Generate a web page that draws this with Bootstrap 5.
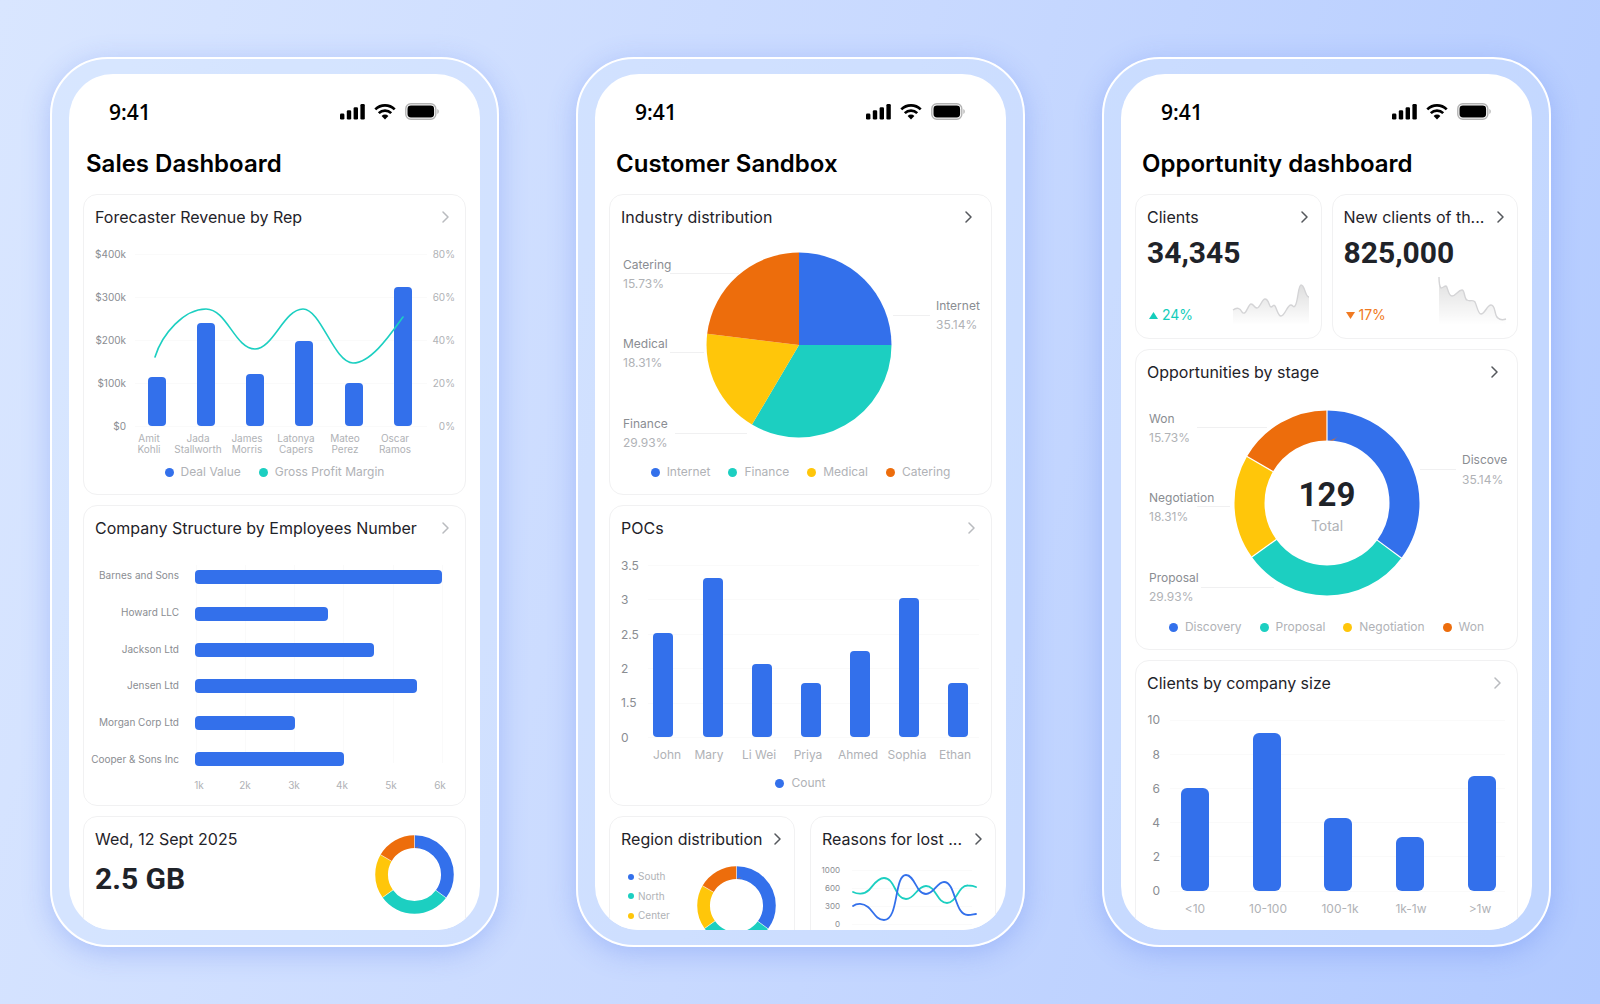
<!DOCTYPE html>
<html lang="en">
<head>
<meta charset="utf-8">
<meta name="viewport" content="width=device-width, initial-scale=1">
<title>CRM mobile dashboards</title>
<link href="https://cdn.jsdelivr.net/npm/bootstrap@5.3.0/dist/css/bootstrap.min.css" rel="stylesheet">
<style>
  :root { --blue:#3370eb; --teal:#1ccfc1; --yellow:#ffc60a; --orange:#ed6d0c; --ink:#1f2329; --name:#8a8d92; --soft:#b0b2b6; --line:#f1f1f2; }
  body { font-family: Inter, "Liberation Sans", sans-serif; color: #000; background: linear-gradient(105deg, #d9e6ff 0%, #c8d9ff 50%, #b2caff 100%) fixed; }
  .stage { display: grid; grid-template-columns: repeat(3, minmax(0, 1fr)); gap: 77px; height: 100vh; padding: 57px 49px 57px 50px; }
  .phone { min-height: 0; padding: 15px 17px; border: 2px solid #fff; border-radius: 58px; background: rgba(216, 233, 255, .36); box-shadow: 0 6px 28px rgba(84, 122, 235, .32); }
  .screen { height: 100%; overflow: hidden; padding: 0 14px; border-radius: 44px; background: #fff; }
  .status { height: 75px; padding: 0 27px 0 26px; }
  .clock { font: 600 21px/24px "Open Sans", "Noto Sans", sans-serif; }
  .signal { gap: 9px; }
  .page-title { font-size: 24px; line-height: 30px; font-weight: 600; margin: 0 0 15px; padding-left: 7px; }
  .page-title.tight { padding-left: 3px; }
  .tiles { gap: 10px; }
  .tile { border: 1px solid var(--line); border-radius: 14px; background: #fff; min-width: 0; }
  .tile-head { height: 43px; padding: 0 16px 0 11px; }
  .tile-head.inset { padding-right: 19px; }
  .tile-head.slim { padding-right: 13px; }
  .tile-title { font-size: 16px; line-height: 20px; font-weight: 400; margin: 0; white-space: nowrap; color: var(--ink); }
  .go { display: flex; color: #b9bbbf; }
  .inset .go, .slim .go { color: #55585d; }
  .pair { display: grid; grid-template-columns: 1fr 1fr; gap: 10px; }
  .pair.wide { gap: 15px; margin-right: -4px; }
  .plot { display: block; width: 100%; height: auto; overflow: visible; }
  .keys { height: 24px; gap: 18px; margin: 0 0 10px; padding: 0; list-style: none; font-size: 12px; line-height: 24px; color: var(--soft); }
  .keys li { display: flex; align-items: center; gap: 7px; }
  .dot { width: 9px; height: 9px; border-radius: 50%; }
  .c-blue { background: var(--blue); } .c-teal { background: var(--teal); } .c-yellow { background: var(--yellow); } .c-orange { background: var(--orange); }
  .figure-big { font: 700 30px/30px Roboto, sans-serif; color: var(--ink); padding-left: 11px; }
  .trend { padding: 2px 12px 11px 13px; }
  .delta { gap: 4px; font-size: 14px; line-height: 24px; }
  .up { color: #14cdbb; } .down { color: #f07a22; }
  .spark { width: 78px; height: 57px; overflow: visible; }
  .storage { padding: 18px 11px 40px 0; }
  .t8 { font-size: 8px; } .t10 { font-size: 10px; } .t12 { font-size: 12px; } .t14 { font-size: 14px; }
  .n { fill: var(--name); } .s { fill: var(--soft); }
  .end { text-anchor: end; } .mid { text-anchor: middle; }
  .total { font: 700 33px Roboto, sans-serif; fill: var(--ink); }
  .rules { stroke: #fafafa; fill: none; } .leads { stroke: #f0f0f1; fill: none; }
  .bars { fill: var(--blue); }
</style>
</head>
<body>
<svg width="0" height="0" class="position-absolute" aria-hidden="true">
  <defs>
    <symbol id="ring" viewBox="-93 -93 186 186">
      <g fill="none" stroke-width="30" transform="rotate(-90)">
        <circle r="77.5" pathLength="10000" stroke="#3370eb" stroke-dasharray="3514 6486"/>
        <circle r="77.5" pathLength="10000" stroke="#1ccfc1" stroke-dasharray="2993 7007" stroke-dashoffset="-3514"/>
        <circle r="77.5" pathLength="10000" stroke="#ffc60a" stroke-dasharray="1831 8169" stroke-dashoffset="-6507"/>
        <circle r="77.5" pathLength="10000" stroke="#ed6d0c" stroke-dasharray="1662 8338" stroke-dashoffset="-8338"/>
        <g stroke="#fff" stroke-width="1.2">
          <path d="M62 0H93"/><path d="M62 0H93" transform="rotate(126.5)"/><path d="M62 0H93" transform="rotate(234.3)"/><path d="M62 0H93" transform="rotate(300.2)"/>
        </g>
      </g>
    </symbol>
    <symbol id="chev" viewBox="0 0 7 12"><path d="M1 1l5 5-5 5" fill="none" stroke="currentColor" stroke-width="1.5" stroke-linecap="round" stroke-linejoin="round"/></symbol>
    <symbol id="bars" viewBox="0 0 25 17"><rect y="10.5" width="4.4" height="6" rx="1.3"/><rect x="6.8" y="7.3" width="4.4" height="9.2" rx="1.3"/><rect x="13.6" y="4.2" width="4.4" height="12.3" rx="1.3"/><rect x="20.4" y="1" width="4.4" height="15.5" rx="1.3"/></symbol>
    <symbol id="wifi" viewBox="0 0 22 17"><g fill="none" stroke="#000" stroke-width="2.7"><path d="M1.3 6.4a13.8 13.8 0 0 1 19.4 0"/><path d="M4.8 10.1a8.8 8.8 0 0 1 12.4 0"/></g><path d="M11 16.4l-3.4-3.5a4.9 4.9 0 0 1 6.8 0z"/></symbol>
    <symbol id="battery" viewBox="0 0 34 17"><rect x=".8" y=".8" width="30" height="15.4" rx="5" fill="none" stroke="#b3b3b3" stroke-width="1.4"/><rect x="2.5" y="2.6" width="26.6" height="11.8" rx="3.4"/><path d="M32.4 6v5c1.8-.8 1.8-4.2 0-5z" fill="#b3b3b3"/></symbol>
    <linearGradient id="fade" x1="0" y1="0" x2="0" y2="1"><stop stop-color="#000" stop-opacity=".13"/><stop offset="1" stop-color="#000" stop-opacity="0"/></linearGradient>
  </defs>
</svg>

<main class="stage">
  <!-- Sales -->
  <section class="phone"><div class="screen">
    <div class="status d-flex align-items-center justify-content-between">
      <span class="clock">9:41</span>
      <span class="signal d-flex"><svg width="25" height="17"><use href="#bars"/></svg><svg width="22" height="17"><use href="#wifi"/></svg><svg width="34" height="17"><use href="#battery"/></svg></span>
    </div>
    <h1 class="page-title tight">Sales Dashboard</h1>
    <div class="tiles d-flex flex-column">
      <article class="tile">
        <header class="tile-head d-flex align-items-center justify-content-between"><h2 class="tile-title">Forecaster Revenue by Rep</h2><a class="go" href="#" aria-label="Open revenue"><svg width="7" height="12"><use href="#chev"/></svg></a></header>
        <svg class="plot" viewBox="0 0 381 222">
          <path class="rules" d="M51 16.5H343M51 59.5H343M51 102.5H343M51 145.5H343M51 188.5H343"/>
          <g class="t10 n end"><text x="42" y="20">$400k</text><text x="42" y="63">$300k</text><text x="42" y="106">$200k</text><text x="42" y="149">$100k</text><text x="42" y="192">$0</text></g>
          <g class="t10 s end"><text x="371" y="20">80%</text><text x="371" y="63">60%</text><text x="371" y="106">40%</text><text x="371" y="149">20%</text><text x="371" y="192">0%</text></g>
          <g class="bars"><rect x="64" y="139" width="18" height="49" rx="4"/><rect x="113" y="85" width="18" height="103" rx="4"/><rect x="162" y="136" width="18" height="52" rx="4"/><rect x="211" y="103" width="18" height="85" rx="4"/><rect x="261" y="145" width="18" height="43" rx="4"/><rect x="310" y="49" width="18" height="139" rx="4"/></g>
          <path fill="none" stroke="#1ccfc1" stroke-width="1.6" stroke-linecap="round" d="M71 119C78 96 100 71 122 71C143 71 151 111 171 111C189 111 200 71 219 71C237 71 250 125 269 125C287 125 306 97 319 79"/>
          <g class="t10 s mid"><text x="65" y="204">Amit</text><text x="65" y="215">Kohli</text><text x="114" y="204">Jada</text><text x="114" y="215">Stallworth</text><text x="163" y="204">James</text><text x="163" y="215">Morris</text><text x="212" y="204">Latonya</text><text x="212" y="215">Capers</text><text x="261" y="204">Mateo</text><text x="261" y="215">Perez</text><text x="311" y="204">Oscar</text><text x="311" y="215">Ramos</text></g>
        </svg>
        <ul class="keys d-flex justify-content-center"><li><span class="dot c-blue"></span>Deal Value</li><li><span class="dot c-teal"></span>Gross Profit Margin</li></ul>
      </article>

      <article class="tile">
        <header class="tile-head d-flex align-items-center justify-content-between"><h2 class="tile-title">Company Structure by Employees Number</h2><a class="go" href="#" aria-label="Open company structure"><svg width="7" height="12"><use href="#chev"/></svg></a></header>
        <svg class="plot" viewBox="0 0 381 256">
          <path class="rules" d="M112.5 16V214M161.5 16V214M210.5 16V214M259.5 16V214M309.5 16V214M358.5 16V214"/>
          <g class="bars"><rect x="111" y="21" width="247" height="14" rx="4"/><rect x="111" y="58" width="133" height="14" rx="4"/><rect x="111" y="94" width="179" height="14" rx="4"/><rect x="111" y="130" width="222" height="14" rx="4"/><rect x="111" y="167" width="100" height="14" rx="4"/><rect x="111" y="203" width="149" height="14" rx="4"/></g>
          <g class="t10 n end"><text x="95" y="30">Barnes and Sons</text><text x="95" y="67">Howard LLC</text><text x="95" y="104">Jackson Ltd</text><text x="95" y="140">Jensen Ltd</text><text x="95" y="177">Morgan Corp Ltd</text><text x="95" y="214">Cooper &amp; Sons Inc</text></g>
          <g class="t10 s mid"><text x="115" y="240">1k</text><text x="161" y="240">2k</text><text x="210" y="240">3k</text><text x="258" y="240">4k</text><text x="307" y="240">5k</text><text x="356" y="240">6k</text></g>
        </svg>
      </article>

      <article class="tile d-flex justify-content-between">
        <div>
          <header class="tile-head d-flex align-items-center"><h2 class="tile-title">Wed, 12 Sept 2025</h2></header>
          <div class="figure-big pt-1">2.5 GB</div>
        </div>
        <div class="storage"><svg class="d-block" width="79" height="79"><use href="#ring"/></svg></div>
      </article>
    </div>
  </div></section>

  <!-- Customers -->
  <section class="phone"><div class="screen">
    <div class="status d-flex align-items-center justify-content-between">
      <span class="clock">9:41</span>
      <span class="signal d-flex"><svg width="25" height="17"><use href="#bars"/></svg><svg width="22" height="17"><use href="#wifi"/></svg><svg width="34" height="17"><use href="#battery"/></svg></span>
    </div>
    <h1 class="page-title">Customer Sandbox</h1>
    <div class="tiles d-flex flex-column">
      <article class="tile">
        <header class="tile-head inset d-flex align-items-center justify-content-between"><h2 class="tile-title">Industry distribution</h2><a class="go" href="#" aria-label="Open industry distribution"><svg width="7" height="12"><use href="#chev"/></svg></a></header>
        <svg class="plot" viewBox="0 0 381 222">
          <path class="leads" d="M60 35.5H129M60 114.5H94M65 195.5H137M283 77.5H320"/>
          <path fill="#3370eb" d="M189 107V14.5A92.5 92.5 0 0 1 281.5 107z"/>
          <path fill="#1ccfc1" d="M189 107H281.5A92.5 92.5 0 0 1 142 186.6z"/>
          <path fill="#ffc60a" d="M189 107L142 186.6A92.5 92.5 0 0 1 97.2 95.8z"/>
          <path fill="#ed6d0c" d="M189 107L97.2 95.8A92.5 92.5 0 0 1 189 14.5z"/>
          <g class="t12 n"><text x="13" y="31">Catering</text><text x="13" y="110">Medical</text><text x="13" y="190">Finance</text><text x="326" y="72">Internet</text></g>
          <g class="t12 s"><text x="13" y="50">15.73%</text><text x="13" y="129">18.31%</text><text x="13" y="209">29.93%</text><text x="326" y="91">35.14%</text></g>
        </svg>
        <ul class="keys d-flex justify-content-center"><li><span class="dot c-blue"></span>Internet</li><li><span class="dot c-teal"></span>Finance</li><li><span class="dot c-yellow"></span>Medical</li><li><span class="dot c-orange"></span>Catering</li></ul>
      </article>

      <article class="tile">
        <header class="tile-head d-flex align-items-center justify-content-between"><h2 class="tile-title">POCs</h2><a class="go" href="#" aria-label="Open POCs"><svg width="7" height="12"><use href="#chev"/></svg></a></header>
        <svg class="plot" viewBox="0 0 381 222">
          <path class="rules" d="M38 16.5H369M38 50.5H369M38 85.5H369M38 119.5H369M38 154.5H369M38 188.5H369"/>
          <g class="t12 n"><text x="11" y="21">3.5</text><text x="11" y="55">3</text><text x="11" y="90">2.5</text><text x="11" y="124">2</text><text x="11" y="158">1.5</text><text x="11" y="193">0</text></g>
          <g class="bars"><rect x="43" y="84" width="20" height="104" rx="4"/><rect x="93" y="29" width="20" height="159" rx="4"/><rect x="142" y="115" width="20" height="73" rx="4"/><rect x="191" y="134" width="20" height="54" rx="4"/><rect x="240" y="102" width="20" height="86" rx="4"/><rect x="289" y="49" width="20" height="139" rx="4"/><rect x="338" y="134" width="20" height="54" rx="4"/></g>
          <g class="t12 s mid"><text x="57" y="210">John</text><text x="99" y="210">Mary</text><text x="149" y="210">Li Wei</text><text x="198" y="210">Priya</text><text x="248" y="210">Ahmed</text><text x="297" y="210">Sophia</text><text x="345" y="210">Ethan</text></g>
        </svg>
        <ul class="keys d-flex justify-content-center"><li><span class="dot c-blue"></span>Count</li></ul>
      </article>

      <div class="pair wide">
        <article class="tile">
          <header class="tile-head slim d-flex align-items-center justify-content-between"><h2 class="tile-title">Region distribution</h2><a class="go" href="#" aria-label="Open region distribution"><svg width="7" height="12"><use href="#chev"/></svg></a></header>
          <svg class="plot" viewBox="0 0 184 110">
            <circle cx="21" cy="17" r="3" fill="#3370eb"/><circle cx="21" cy="36" r="3" fill="#1ccfc1"/><circle cx="21" cy="56" r="3" fill="#ffc60a"/><circle cx="21" cy="75" r="3" fill="#ed6d0c"/>
            <g class="t10 s"><text x="28" y="20">South</text><text x="28" y="40">North</text><text x="28" y="59">Center</text></g>
            <use href="#ring" x="87" y="6" width="79" height="79"/>
          </svg>
        </article>
        <article class="tile">
          <header class="tile-head slim d-flex align-items-center justify-content-between"><h2 class="tile-title">Reasons for lost ...</h2><a class="go" href="#" aria-label="Open reasons for lost deals"><svg width="7" height="12"><use href="#chev"/></svg></a></header>
          <svg class="plot" viewBox="0 0 184 110">
            <path class="rules" d="M41 10.5H161M41 28.5H161M41 46.5H161M41 64.5H161"/>
            <g class="t8 n end"><text x="29" y="13">1000</text><text x="29" y="31">600</text><text x="29" y="49">300</text><text x="29" y="67">0</text></g>
            <g fill="none" stroke-width="1.8" stroke-linecap="round">
              <path stroke="#1ccfc1" d="M42 32C46 34 53 35 58 30C62 26 66 18 73 18C84 18 84 39 95 39C104 39 106 26 115 26C125 26 126 43 136 43C146 43 147 25 157 25.500C161 25.500 163 26 165 27"/>
              <path stroke="#3370eb" d="M42 46C46 43 52 43 57 47C62 51 65 60 73 60C88 60 83 15 95 15C104 15 105 34 115 34C123 34 126 22 133 22C145 22 143 55 157 55C161 55 163 54 165 54"/>
            </g>
          </svg>
        </article>
      </div>
    </div>
  </div></section>

  <!-- Opportunities -->
  <section class="phone"><div class="screen">
    <div class="status d-flex align-items-center justify-content-between">
      <span class="clock">9:41</span>
      <span class="signal d-flex"><svg width="25" height="17"><use href="#bars"/></svg><svg width="22" height="17"><use href="#wifi"/></svg><svg width="34" height="17"><use href="#battery"/></svg></span>
    </div>
    <h1 class="page-title">Opportunity dashboard</h1>
    <div class="tiles d-flex flex-column">
      <div class="pair">
        <article class="tile">
          <header class="tile-head slim d-flex align-items-center justify-content-between"><h2 class="tile-title">Clients</h2><a class="go" href="#" aria-label="Open clients"><svg width="7" height="12"><use href="#chev"/></svg></a></header>
          <div class="figure-big">34,345</div>
          <div class="trend d-flex align-items-end justify-content-between">
            <span class="delta up d-flex align-items-center"><svg width="9" height="7"><path d="M4.500 0L9 7H0z" fill="currentColor"/></svg>24%</span>
            <svg class="spark" viewBox="0 0 78 57">
              <path fill="url(#fade)" d="M2 40C6 37 9 38 11 42C15 47 17 34 20 34C23 34 23 38 26 38C29 38 31 29 34 29C38 29 38 37 40 37C42 37 42 34 44 36C46 39 47 46 50 46C54 46 56 35 60 35C62 35 62 38 64 36C67 33 67 15 70 15C74 15 74 27 78 27V55H2z"/>
              <path fill="none" stroke="#d4d4d6" stroke-width="1.400" d="M2 40C6 37 9 38 11 42C15 47 17 34 20 34C23 34 23 38 26 38C29 38 31 29 34 29C38 29 38 37 40 37C42 37 42 34 44 36C46 39 47 46 50 46C54 46 56 35 60 35C62 35 62 38 64 36C67 33 67 15 70 15C74 15 74 27 78 27"/>
            </svg>
          </div>
        </article>
        <article class="tile">
          <header class="tile-head slim d-flex align-items-center justify-content-between"><h2 class="tile-title">New clients of th...</h2><a class="go" href="#" aria-label="Open new clients"><svg width="7" height="12"><use href="#chev"/></svg></a></header>
          <div class="figure-big">825,000</div>
          <div class="trend d-flex align-items-end justify-content-between">
            <span class="delta down d-flex align-items-center"><svg width="9" height="7"><path d="M4.500 7L9 0H0z" fill="currentColor"/></svg>17%</span>
            <svg class="spark" viewBox="0 0 78 57">
              <path fill="url(#fade)" d="M12 7C12 12 13 17 14 18C16 18 17 16 19 16C21 17 21 26 25 26C29 26 31 20 35 20C38 20 37 29 40 30C43 32 46 29 48 32C50 36 51 44 54 44C58 44 60 35 64 35C69 35 67 46 71 48C73 50 76 50 79 49V55H12z"/>
              <path fill="none" stroke="#d4d4d6" stroke-width="1.400" d="M12 7C12 12 13 17 14 18C16 18 17 16 19 16C21 17 21 26 25 26C29 26 31 20 35 20C38 20 37 29 40 30C43 32 46 29 48 32C50 36 51 44 54 44C58 44 60 35 64 35C69 35 67 46 71 48C73 50 76 50 79 49"/>
            </svg>
          </div>
        </article>
      </div>

      <article class="tile">
        <header class="tile-head inset d-flex align-items-center justify-content-between"><h2 class="tile-title">Opportunities by stage</h2><a class="go" href="#" aria-label="Open opportunities by stage"><svg width="7" height="12"><use href="#chev"/></svg></a></header>
        <svg class="plot" viewBox="0 0 381 222">
          <path class="leads" d="M61 34.5H131M61 113.5H94M65 194.5H138M284 76.5H320"/>
          <use href="#ring" x="98" y="17" width="186" height="186"/>
          <text class="total mid" x="191" y="113">129</text><text class="t14 s mid" x="191" y="138">Total</text>
          <g class="t12 n"><text x="13" y="30">Won</text><text x="13" y="109">Negotiation</text><text x="13" y="189">Proposal</text><text x="326" y="71">Discove</text></g>
          <g class="t12 s"><text x="13" y="49">15.73%</text><text x="13" y="128">18.31%</text><text x="13" y="208">29.93%</text><text x="326" y="91">35.14%</text></g>
        </svg>
        <ul class="keys d-flex justify-content-center"><li><span class="dot c-blue"></span>Discovery</li><li><span class="dot c-teal"></span>Proposal</li><li><span class="dot c-yellow"></span>Negotiation</li><li><span class="dot c-orange"></span>Won</li></ul>
      </article>

      <article class="tile">
        <header class="tile-head d-flex align-items-center justify-content-between"><h2 class="tile-title">Clients by company size</h2><a class="go" href="#" aria-label="Open clients by size"><svg width="7" height="12"><use href="#chev"/></svg></a></header>
        <svg class="plot" viewBox="0 0 381 256">
          <path class="rules" d="M34 16.5H369M34 50.5H369M34 84.5H369M34 118.5H369M34 152.5H369M34 187.5H369"/>
          <g class="t12 n end"><text x="24" y="20">10</text><text x="24" y="55">8</text><text x="24" y="89">6</text><text x="24" y="123">4</text><text x="24" y="157">2</text><text x="24" y="191">0</text></g>
          <g class="bars"><rect x="45" y="84" width="28" height="103" rx="6"/><rect x="117" y="29" width="28" height="158" rx="6"/><rect x="188" y="114" width="28" height="73" rx="6"/><rect x="260" y="133" width="28" height="54" rx="6"/><rect x="332" y="72" width="28" height="115" rx="6"/></g>
          <g class="t12 s mid"><text x="59" y="209">&lt;10</text><text x="132" y="209">10-100</text><text x="204" y="209">100-1k</text><text x="275" y="209">1k-1w</text><text x="344" y="209">&gt;1w</text></g>
        </svg>
      </article>
    </div>
  </div></section>
</main>
<script src="https://cdn.jsdelivr.net/npm/bootstrap@5.3.0/dist/js/bootstrap.bundle.min.js"></script>
</body>
</html>
